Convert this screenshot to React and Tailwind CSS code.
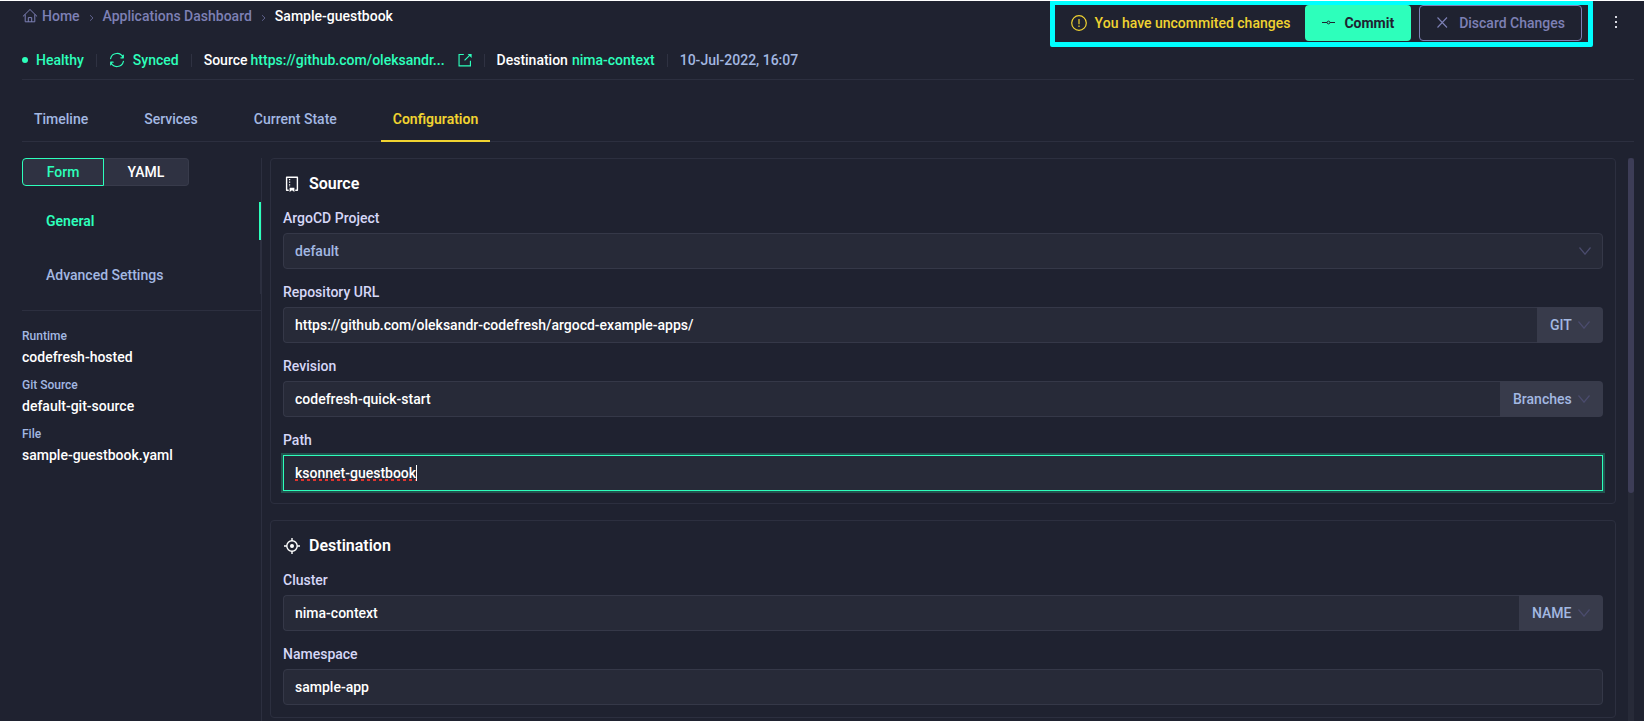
import React from "react";

function Svg({ size = 16, children, className = "", sw = 1 }) {
  return (
    <svg
      width={size}
      height={size}
      viewBox="0 0 16 16"
      fill="none"
      stroke="currentColor"
      strokeWidth={sw}
      strokeLinecap="round"
      strokeLinejoin="round"
      aria-hidden="true"
      className={`shrink-0 ${className}`}
    >
      {children}
    </svg>
  );
}

const HomeIcon = () => (
  <Svg>
    <path d="M1.2 8.2 8 1.5 14.8 8.2M3.2 6.8v7h9.6v-7M6.3 13.5V9.6h3.4v3.9" />
  </Svg>
);

const CrumbArrow = () => (
  <svg width="5" height="8" viewBox="0 0 5 8" fill="none" stroke="currentColor" aria-hidden="true" className="mt-1 shrink-0 text-[#5d608a]">
    <path d="M1 1.2 4 4 1 6.8" />
  </svg>
);

const SyncIcon = () => (
  <Svg sw={1.2}>
    <path d="M1.6 6.6A6.5 6.5 0 0 1 14 5.6M14.4 9.4A6.5 6.5 0 0 1 2 10.4M14.3 3.2v2.6h-2.4M1.7 12.8v-2.6h2.4" />
  </Svg>
);

const ExternalIcon = () => (
  <Svg size={14} sw={1.3}>
    <path strokeLinecap="square" strokeLinejoin="miter" d="M6 1.7H1.2v13h13V9.5M8 8l5.4-5.4" />
    <path d="M11 1.2h4.6v4.6z" fill="currentColor" stroke="none" />
  </Svg>
);

const Chevron = ({ className = "" }) => (
  <svg width="12" height="8" viewBox="0 0 12 8" fill="none" stroke="currentColor" strokeWidth="1.2" aria-hidden="true" className={`pointer-events-none absolute top-1/2 -translate-y-1/2 text-[#4b4c6e] ${className}`}>
    <path d="M.5.5 6 7.2 11.5.5" />
  </svg>
);

const RepoIcon = () => (
  <Svg>
    <path strokeWidth="1.4" d="M4.2 14.3H2.6V1.2h10.8v13.1h-1.6" />
    <path strokeWidth="1.2" strokeLinecap="butt" strokeDasharray="1.2 1.4" d="M5.6 3v8" />
    <path fill="currentColor" stroke="none" d="M5.6 11.8h4.8V16L8 14.3 5.6 16z" />
  </Svg>
);

const TargetIcon = () => (
  <Svg>
    <circle cx="8" cy="8" r="5.2" strokeWidth="1.4" />
    <circle cx="8" cy="8" r="2" fill="currentColor" stroke="none" />
    <path strokeWidth="1.4" strokeLinecap="butt" d="M8 0v2.8M8 13.2V16M0 8h2.8M13.2 8H16" />
  </Svg>
);

const Divider = () => <span className="mx-3 h-[13px] w-px bg-[#2f3242]" />;

const fieldBox = "h-9 w-full rounded border border-[#353848] bg-[#272a38] px-[11px] text-sm font-medium outline-none";

function Field({ id, label, children }) {
  return (
    <div className="mt-[13px] flex flex-col gap-[5px]">
      <label htmlFor={id} className="self-start text-sm leading-5 font-medium text-[#d6d7f7]">
        {label}
      </label>
      {children}
    </div>
  );
}

function InputWithSelect({ id, value, option, optionLabel }) {
  return (
    <div className="flex">
      <input id={id} defaultValue={value} spellCheck={false} className="h-9 min-w-0 flex-1 rounded-l border border-r-0 border-[#353848] bg-[#272a38] px-[11px] text-sm font-medium text-white outline-none" />
      <div className="relative">
        <select aria-label={optionLabel} className="h-9 appearance-none rounded-r bg-[#383b4b] pr-[31px] pl-[13px] text-sm font-medium text-[#a3b8e2] outline-none">
          <option>{option}</option>
        </select>
        <Chevron className="right-[13px]" />
      </div>
    </div>
  );
}

function Card({ icon, title, children }) {
  return (
    <section className="rounded border border-[#2c2f3f] px-3 pb-3">
      <h2 className="flex h-9 items-end gap-[9px] pl-px text-base leading-[22px] font-semibold text-white">
        <span className="flex h-[22px] items-center">{icon}</span>
        {title}
      </h2>
      {children}
    </section>
  );
}

function Meta({ label, value }) {
  return (
    <div className="h-[49px]">
      <dt className="text-xs leading-5 text-[#a3b8e2]">{label}</dt>
      <dd className="text-sm leading-[22px] font-medium text-white">{value}</dd>
    </div>
  );
}

const tabs = ["Timeline", "Services", "Current State", "Configuration"];

export default function App() {
  return (
    <div className="flex h-screen flex-col overflow-hidden border-t border-white bg-[#1f2230] pr-[10px] pl-[22px] font-[Roboto,sans-serif] text-sm font-medium text-white">
      <header className="border-b border-[#2c2f3f]">
        <div className="-mt-px flex items-start">
          <nav aria-label="Breadcrumb" className="flex h-8 items-center whitespace-nowrap text-[#7d80b5]">
            <a href="#" className="flex items-center gap-1">
              <HomeIcon />
              Home
            </a>
            <span className="mx-[9px]"><CrumbArrow /></span>
            <a href="#">Applications Dashboard</a>
            <span className="mx-[9px]"><CrumbArrow /></span>
            <span className="text-white">Sample-guestbook</span>
          </nav>
          <div className="ml-auto flex items-start rounded-xs border-[5px] border-[#00ffff] bg-[#1f2230] pr-[6px] pb-px pl-4">
            <p className="mr-[15px] flex h-9 items-center gap-2 whitespace-nowrap text-[#f0d331]">
              <Svg>
                <circle cx="8" cy="8" r="7.3" strokeWidth="1.2" />
                <path strokeWidth="1.2" strokeLinecap="butt" d="M8 4v5.2M8 10.6v1.4" />
              </Svg>
              You have uncommited changes
            </p>
            <button type="button" className="mr-2 flex h-9 items-center gap-[9px] rounded bg-[#2dffbb] px-[17px] font-bold text-[#1f2230]">
              <svg width="13" height="6" viewBox="0 0 13 6" fill="none" stroke="currentColor" aria-hidden="true">
                <path d="M0 2.5h5M8 2.5h5" />
                <circle cx="6.5" cy="2.5" r="1.4" />
              </svg>
              Commit
            </button>
            <button type="button" className="flex h-9 items-center gap-[11px] rounded border border-[#7d80b5] px-4 whitespace-nowrap text-[#7d80b5]">
              <svg width="12" height="12" viewBox="0 0 12 12" fill="none" stroke="currentColor" strokeWidth="1.1" aria-hidden="true">
                <path d="M1.5.5 11 10.5M11 .5 1.5 10.5" />
              </svg>
              Discard Changes
            </button>
          </div>
          <button type="button" aria-label="More actions" className="ml-[5px] flex h-11 w-9 items-center justify-center text-[#d6d7e0]">
            <svg width="2" height="12" viewBox="0 0 2 12" fill="currentColor" aria-hidden="true">
              <path d="M0 0h2v2H0zM0 5h2v2H0zM0 10h2v2H0z" />
            </svg>
          </button>
        </div>
        <div className="mb-[6px] flex h-[26px] items-center whitespace-nowrap text-[#2dffbb]">
          <span className="mr-2 size-[6px] rounded-full bg-[#2dffbb]" />
          Healthy
          <Divider />
          <span className="mr-2"><SyncIcon /></span>
          Synced
          <Divider />
          <span className="mr-[3px] text-white">Source</span>
          <a href="#" className="flex items-center">
            <span className="w-[207px]">https://github.com/oleksandr...</span>
            <ExternalIcon />
          </a>
          <Divider />
          <span className="mr-1 text-white">Destination</span>
          <a href="#">nima-context</a>
          <Divider />
          <time className="text-[#a3b8e2]">10-Jul-2022, 16:07</time>
        </div>
      </header>

      <nav aria-label="Sections" className="mt-[17px] flex shrink-0 gap-8 border-b border-[#2c2f3f]">
        {tabs.map((t) => (
          <a
            key={t}
            href="#"
            className={
              t === "Configuration"
                ? "-mb-px flex h-[45px] items-center border-b-2 border-[#f0d331] px-3 font-semibold text-[#f0d331]"
                : "-mb-px flex h-[45px] items-center border-b-2 border-transparent px-3 text-[#a3b8e2]"
            }
          >
            {t}
          </a>
        ))}
      </nav>

      <div className="mt-4 flex min-h-0 flex-1">
        <aside className="w-[240px] shrink-0 border-r border-[#2c2f3f]">
          <div className="flex h-7 w-[167px]">
            <button type="button" className="w-[82px] rounded-l border border-[#2dffbb] bg-[#2f3242] text-[#2dffbb]">Form</button>
            <button type="button" className="flex-1 rounded-r border border-l-0 border-[#383b4b] bg-[#2f3242] text-white">YAML</button>
          </div>
          <nav aria-label="Settings" className="mt-4 mb-4 flex flex-col gap-4 border-r border-[#2c2f3f]">
            <a href="#" className="-mr-px flex h-[38px] items-center border-r-2 border-[#2dffbb] pl-6 font-semibold text-[#2dffbb]">General</a>
            <a href="#" className="flex h-[38px] items-center pl-6 text-[#a3b8e2]">Advanced Settings</a>
          </nav>
          <dl className="border-t border-[#2c2f3f] pt-[15px]">
            <Meta label="Runtime" value="codefresh-hosted" />
            <Meta label="Git Source" value="default-git-source" />
            <Meta label="File" value="sample-guestbook.yaml" />
          </dl>
        </aside>

        <main className="ml-2 flex min-w-0 flex-1 flex-col gap-4 overflow-hidden">
          <Card icon={<RepoIcon />} title="Source">
            <Field id="project" label="ArgoCD Project">
              <div className="relative">
                <select id="project" className={`${fieldBox} appearance-none text-[#a3b8e2]`}>
                  <option>default</option>
                </select>
                <Chevron className="right-3" />
              </div>
            </Field>
            <Field id="repo" label="Repository URL">
              <InputWithSelect id="repo" value="https://github.com/oleksandr-codefresh/argocd-example-apps/" option="GIT" optionLabel="Repository type" />
            </Field>
            <Field id="revision" label="Revision">
              <InputWithSelect id="revision" value="codefresh-quick-start" option="Branches" optionLabel="Revision type" />
            </Field>
            <Field id="path" label="Path">
              <div className="flex h-9 items-center border border-[#2dffbb] bg-[#272a38] px-[11px] ring-2 ring-[#22544f]">
                <input
                  id="path"
                  defaultValue="ksonnet-guestbook"
                  spellCheck={false}
                  className="field-sizing-content h-6 text-sm font-medium text-white underline decoration-[#e0352f] decoration-dotted decoration-3 underline-offset-1 outline-none [text-decoration-skip-ink:none]"
                />
                <span className="h-4 w-px bg-white" />
              </div>
            </Field>
          </Card>
          <Card icon={<TargetIcon />} title="Destination">
            <Field id="cluster" label="Cluster">
              <InputWithSelect id="cluster" value="nima-context" option="NAME" optionLabel="Cluster reference" />
            </Field>
            <Field id="namespace" label="Namespace">
              <input id="namespace" defaultValue="sample-app" spellCheck={false} className={`${fieldBox} text-white`} />
            </Field>
          </Card>
        </main>
        <div className="ml-3 w-[6px] shrink-0 bg-[#272a38]">
          <div className="h-[335px] rounded-full bg-[#3d3d57]" />
        </div>
      </div>
    </div>
  );
}
